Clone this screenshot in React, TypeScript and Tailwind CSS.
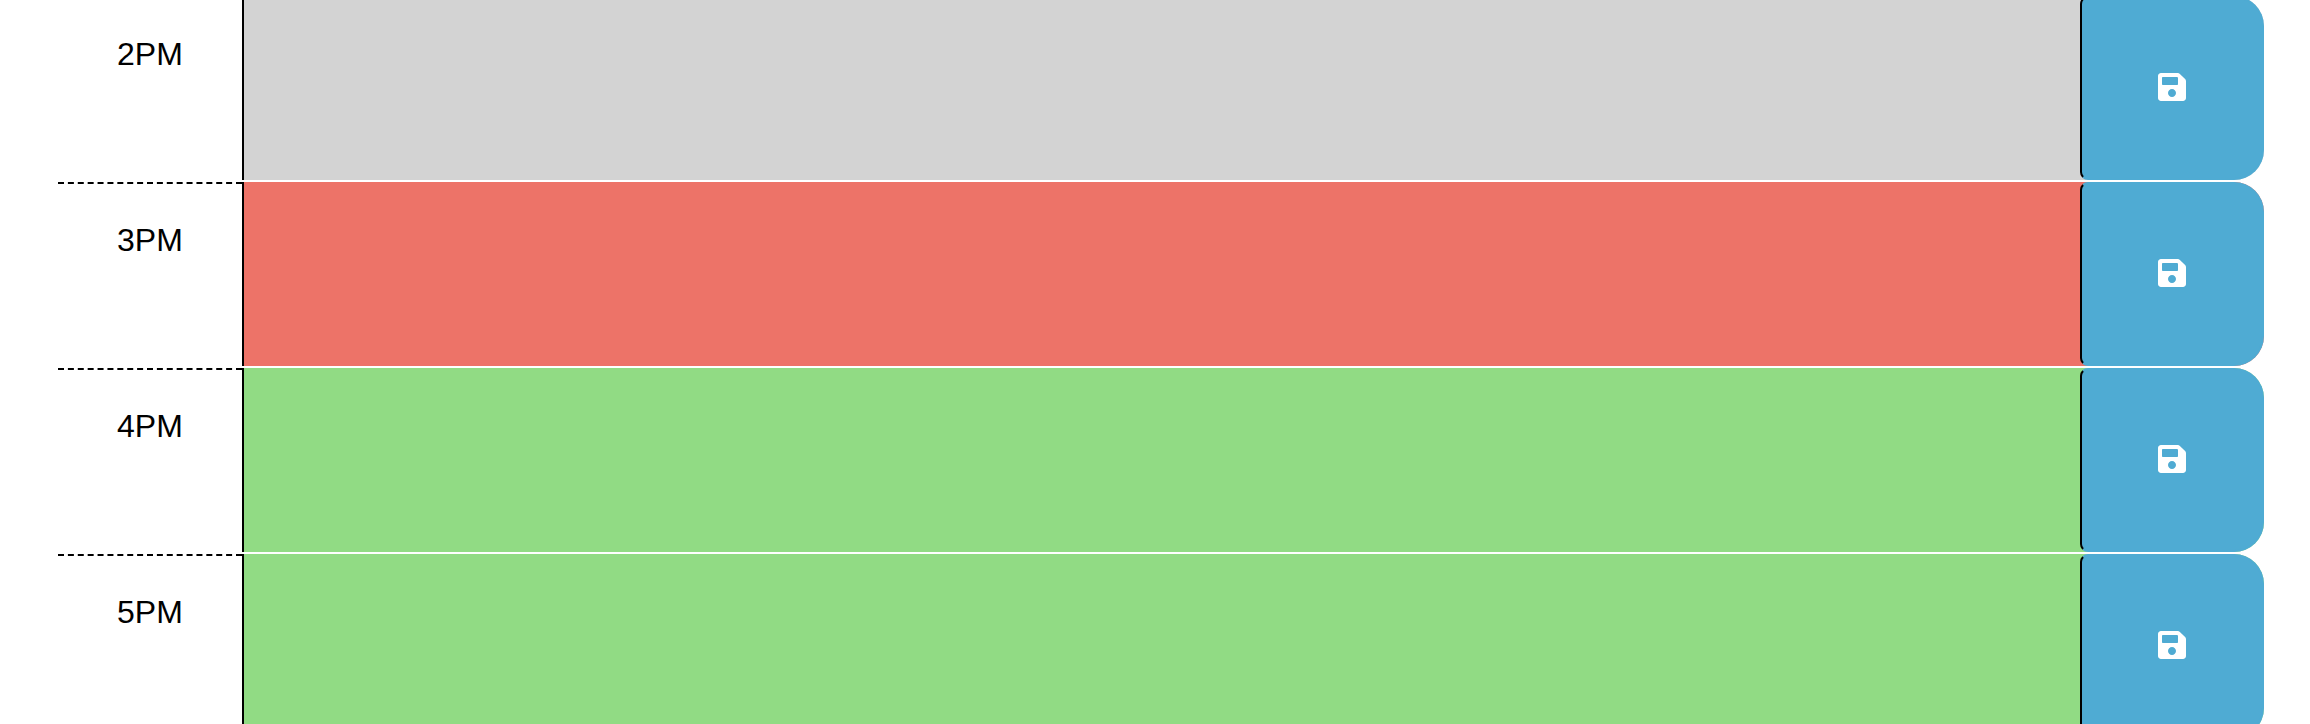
import { FaSave } from "react-icons/fa";

type Status = "past" | "present" | "future";

const background: Record<Status, string> = {
  past: "bg-[#d3d3d3]",
  present: "bg-[#ed7368]",
  future: "bg-[#91db84]",
};

const blocks: { hour: string; status: Status }[] = [
  { hour: "2PM", status: "past" },
  { hour: "3PM", status: "present" },
  { hour: "4PM", status: "future" },
  { hour: "5PM", status: "future" },
];

function TimeBlock({ hour, status }: { hour: string; status: Status }) {
  const id = `task-${hour}`;
  return (
    <div className={`grid h-46 grid-cols-12 rounded-r-[30px] ${background[status]}`}>
      <label
        htmlFor={id}
        className="border-t-2 border-dashed border-black bg-white pt-8 text-center text-[32px] leading-12"
      >
        {hour}
      </label>
      <textarea
        id={id}
        className="col-span-10 resize-none border-l-2 border-black bg-transparent p-4 text-[32px] text-black outline-none"
      />
      <button
        type="button"
        aria-label={`Save ${hour}`}
        className="flex items-center justify-center rounded-l-lg rounded-r-[30px] border-2 border-[#4fabd3] border-l-black bg-[#4fabd3] pb-0.5 text-white"
      >
        <FaSave className="size-8" />
      </button>
    </div>
  );
}

export default function App() {
  return (
    <main className="h-screen overflow-hidden bg-white pr-[46px] pl-[58px] font-['Liberation_Sans',Arial,sans-serif] text-black">
      <div className="-mt-1 flex flex-col gap-0.5">
        {blocks.map((block) => (
          <TimeBlock key={block.hour} {...block} />
        ))}
      </div>
    </main>
  );
}
